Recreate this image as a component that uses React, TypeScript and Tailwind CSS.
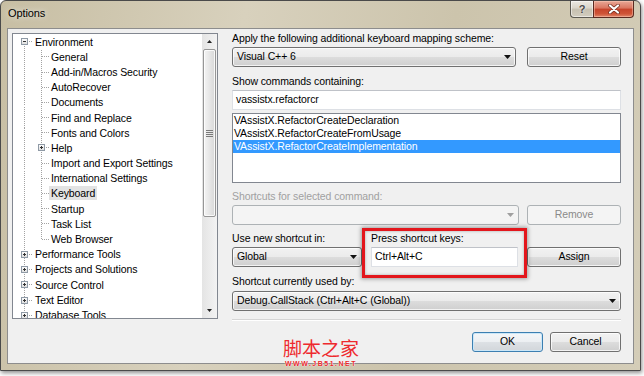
import React from "react";

type Node = { label: string; level: 0 | 1; box?: "+" | "-"; selected?: boolean };

const NODES: Node[] = [
  { label: "Environment", level: 0, box: "-" },
  { label: "General", level: 1 },
  { label: "Add-in/Macros Security", level: 1 },
  { label: "AutoRecover", level: 1 },
  { label: "Documents", level: 1 },
  { label: "Find and Replace", level: 1 },
  { label: "Fonts and Colors", level: 1 },
  { label: "Help", level: 1, box: "+" },
  { label: "Import and Export Settings", level: 1 },
  { label: "International Settings", level: 1 },
  { label: "Keyboard", level: 1, selected: true },
  { label: "Startup", level: 1 },
  { label: "Task List", level: 1 },
  { label: "Web Browser", level: 1 },
  { label: "Performance Tools", level: 0, box: "+" },
  { label: "Projects and Solutions", level: 0, box: "+" },
  { label: "Source Control", level: 0, box: "+" },
  { label: "Text Editor", level: 0, box: "+" },
  { label: "Database Tools", level: 0, box: "+" },
];

const ROW = 15.2;
const cy = (i: number) => Math.floor(7.6 + ROW * i) + 0.5;

function TreeLines() {
  return (
    <svg className="pointer-events-none absolute left-0 top-0" width="189" height="284">
      <defs>
        <linearGradient id="bx" x1="0" y1="0" x2="0" y2="1">
          <stop offset="0" stopColor="#ffffff" />
          <stop offset="1" stopColor="#dcdcdc" />
        </linearGradient>
      </defs>
      <g stroke="#a3a3a3" strokeDasharray="1 1" shapeRendering="crispEdges">
        <line x1="11.5" y1={cy(0)} x2="11.5" y2="284" />
        <line x1="28.5" y1={cy(1) - 7} x2="28.5" y2={cy(13)} />
        {NODES.map((n, i) =>
          n.level === 0 ? (
            <line key={i} x1="12" y1={cy(i)} x2="20" y2={cy(i)} />
          ) : (
            <line key={i} x1="29" y1={cy(i)} x2="36" y2={cy(i)} />
          )
        )}
      </g>
      {NODES.map((n, i) => {
        if (!n.box) return null;
        const x = n.level === 0 ? 11.5 : 28.5;
        const y = cy(i);
        return (
          <g key={"b" + i} shapeRendering="crispEdges">
            <rect x={x - 3} y={y - 3} width="6" height="6" fill="url(#bx)" stroke="#8f9aa6" />
            <line x1={x - 1.5} y1={y} x2={x + 1.5} y2={y} stroke="#333" />
            {n.box === "+" && <line x1={x} y1={y - 1.5} x2={x} y2={y + 1.5} stroke="#333" />}
          </g>
        );
      })}
    </svg>
  );
}

function Tree() {
  return (
    <div className="ml-[4px] mt-[4px] flex h-[286px] w-[206px] shrink-0 border border-[#828790] bg-white">
      <div className="relative flex-1 overflow-hidden">
        <TreeLines />
        {NODES.map((n) => (
          <div
            key={n.label}
            className={`relative flex h-[15.2px] items-center whitespace-nowrap ${n.level === 0 ? "pl-[22px]" : "pl-[38px]"}`}
          >
            <span className={`-ml-[2px] px-[2px] leading-[14px] ${n.selected ? "bg-[#e3e3e3]" : ""}`}>{n.label}</span>
          </div>
        ))}
      </div>
      <div className="flex w-[15px] flex-col bg-[linear-gradient(to_right,#e4e4e4,#f3f3f3)]">
        <div className="flex h-[15px] items-center justify-center">
          <svg width="5" height="3"><path d="M0 3L2.5 0L5 3z" fill="#222" /></svg>
        </div>
        <div className="mx-[1px] flex h-[168px] items-center justify-center rounded-[2px] border border-[#969696] bg-[linear-gradient(to_right,#f4f4f4,#e6e6e6_50%,#d8d8d8)] shadow-[inset_0_0_0_1px_rgba(255,255,255,0.8)]">
          <svg width="7" height="7">
            <g stroke="#7a7a7a" shapeRendering="crispEdges">
              <line x1="0" y1="0.5" x2="7" y2="0.5" />
              <line x1="0" y1="2.5" x2="7" y2="2.5" />
              <line x1="0" y1="4.5" x2="7" y2="4.5" />
              <line x1="0" y1="6.5" x2="7" y2="6.5" />
            </g>
          </svg>
        </div>
        <div className="flex-1" />
        <div className="flex h-[15px] items-center justify-center">
          <svg width="5" height="3"><path d="M0 0L2.5 3L5 0z" fill="#222" /></svg>
        </div>
      </div>
    </div>
  );
}

function Btn({ children, className = "", disabled, isDefault }: { children: React.ReactNode; className?: string; disabled?: boolean; isDefault?: boolean }) {
  const look = disabled
    ? "border-[#adb2b5] bg-[#f4f4f4] text-[#8a8a8a]"
    : isDefault
    ? "border-[#3c7fb1] bg-[linear-gradient(#f4f6f8,#eceff2_50%,#dde1e5_50%,#d2d6da)] shadow-[inset_0_0_0_1px_#cbe7f8]"
    : "border-[#707070] bg-[linear-gradient(#f2f2f2,#ebebeb_50%,#dddddd_50%,#cfcfcf)] shadow-[inset_0_0_0_1px_rgba(255,255,255,0.75)]";
  return (
    <div className={`flex h-[20px] items-center justify-center rounded-[3px] border ${look} ${className}`}>{children}</div>
  );
}

function Combo({ value, className = "", disabled }: { value?: string; className?: string; disabled?: boolean }) {
  const look = disabled
    ? "border-[#adb2b5] bg-[#f4f4f4]"
    : "border-[#707070] bg-[linear-gradient(#f2f2f2,#ebebeb_50%,#dddddd_50%,#cfcfcf)] shadow-[inset_0_0_0_1px_rgba(255,255,255,0.75)]";
  return (
    <div className={`flex h-[20px] items-center justify-between rounded-[3px] border pl-[4px] pr-[4px] ${look} ${className}`}>
      <span className="whitespace-nowrap">{value}</span>
      <svg width="7" height="4"><path d="M0 0h7L3.5 4z" fill={disabled ? "#a0a0a0" : "#111"} /></svg>
    </div>
  );
}

function TextBox({ value, className = "" }: { value: string; className?: string }) {
  return (
    <div className={`flex h-[20px] items-center border border-[#dde0e5] border-t-[#bfc2c8] bg-white pl-[3px] ${className}`}>
      {value}
    </div>
  );
}

function Label({ children, muted, className = "" }: { children?: React.ReactNode; muted?: boolean; className?: string }) {
  return (
    <div className={`flex h-[14px] items-center whitespace-nowrap ${muted ? "text-[#a0a0a0]" : ""} ${className}`}>{children}</div>
  );
}

function RightPanel() {
  return (
    <div className="ml-[14px] flex w-[389px] flex-col">
      <Label className="mt-[3px]">Apply the following additional keyboard mapping scheme:</Label>
      <div className="mt-[1px] flex gap-[11px]">
        <Combo value="Visual C++ 6" className="w-[284px]" />
        <Btn className="flex-1">Reset</Btn>
      </div>
      <Label className="mt-[8px]">Show commands containing:</Label>
      <TextBox value="vassistx.refactorcr" className="mt-[1px]" />
      <div className="mt-[3px] h-[70px] border border-[#828790] bg-white">
        <div className="flex h-[13px] items-center pl-[1px]">VAssistX.RefactorCreateDeclaration</div>
        <div className="flex h-[13px] items-center pl-[1px]">VAssistX.RefactorCreateFromUsage</div>
        <div className="flex h-[13px] items-center bg-[#3399ff] pl-[1px] text-white">VAssistX.RefactorCreateImplementation</div>
      </div>
      <Label muted className="mt-[7px]">Shortcuts for selected command:</Label>
      <div className="mt-[1px] flex gap-[8px]">
        <Combo disabled className="w-[287px]" />
        <Btn disabled className="flex-1">Remove</Btn>
      </div>
      <div className="mt-[7px] grid grid-cols-[130px_147px_94px] gap-x-[9px]">
        <div className="flex flex-col">
          <Label>Use new shortcut in:</Label>
          <Combo value="Global" className="mt-[1px]" />
        </div>
        <div className="relative flex flex-col">
          <Label>Press shortcut keys:</Label>
          <TextBox value="Ctrl+Alt+C" className="mt-[1px]" />
          <div className="pointer-events-none absolute -bottom-[11px] -left-[9px] -right-[9px] -top-[4px] border-[3px] border-[#e3161c] shadow-[0_0_4px_1px_rgba(0,0,0,0.35),inset_0_0_3px_rgba(0,0,0,0.3)]" />
        </div>
        <div className="flex flex-col">
          <Label />
          <Btn className="mt-[1px]">Assign</Btn>
        </div>
      </div>
      <Label className="mt-[8px]">Shortcut currently used by:</Label>
      <Combo value="Debug.CallStack (Ctrl+Alt+C (Global))" className="mt-[2px]" />
      <div className="mt-[8px] h-[2px] border-t border-b border-t-[#d5d5d5] border-b-white" />
      <div className="mt-[11px] flex justify-end gap-[7px]">
        <Btn isDefault className="w-[71px]">OK</Btn>
        <Btn className="w-[71px]">Cancel</Btn>
      </div>
    </div>
  );
}

function TitleButtons() {
  return (
    <div className="flex">
      <div className="flex h-[17px] w-[23px] items-center justify-center rounded-bl-[4px] border border-t-0 border-r-0 border-[#5d5a52] bg-[linear-gradient(#ece9e2,#d9d4c8_45%,#c6c0b0_50%,#d2cdbf)] shadow-[inset_0_0_0_1px_rgba(255,255,255,0.5)]">
        <span className="text-[11px] font-bold leading-none text-[#4a4a4a] [text-shadow:0_0_2px_#fff]">?</span>
      </div>
      <div className="flex h-[17px] w-[41px] items-center justify-center rounded-br-[4px] border border-t-0 border-[#5b2a20] bg-[linear-gradient(#e8a896,#d9755f_45%,#c6432a_50%,#cf5437_80%,#e2886c)] shadow-[inset_0_0_0_1px_rgba(255,210,190,0.45)]">
        <svg width="12" height="10" viewBox="0 0 12 10">
          <path d="M2 1.5L10 8.5M10 1.5L2 8.5" stroke="#6b2a1c" strokeWidth="3.6" strokeLinecap="round" />
          <path d="M2 1.5L10 8.5M10 1.5L2 8.5" stroke="#ffffff" strokeWidth="2.2" strokeLinecap="round" />
        </svg>
      </div>
    </div>
  );
}

export default function App() {
  return (
    <div className="relative h-[376px] w-[644px] overflow-hidden bg-white font-['Liberation_Sans',Arial,sans-serif] text-[10.5px] tracking-[-0.1px] text-black">
      <div className="flex h-[371px] w-[641px] flex-col rounded-t-[6px] border border-[#4a4a4a] bg-[linear-gradient(100deg,#c7bea3,#d8d1bd_35%,#ccc4ac_65%,#d4cdb8)] shadow-[1px_2px_4px_rgba(0,0,0,0.45)]">
        <div className="flex h-[27px] shrink-0 items-start justify-between pl-[7px] pr-[6px]">
          <div className="mt-[5px] text-[11px] leading-[14px] [text-shadow:0_0_6px_rgba(255,255,255,0.9)]">Options</div>
          <TitleButtons />
        </div>
        <div className="mx-[6px] mb-[6px] flex flex-1 border border-[#8d8d8d] bg-[#f0f0f0]">
          <Tree />
          <RightPanel />
        </div>
      </div>
      <div className="pointer-events-none absolute left-[283px] top-[338px] flex flex-col items-center">
        <div className="font-['Noto_Sans_CJK_SC',sans-serif] text-[19px] leading-[20px] tracking-[0px] text-[#ee2a2e]">脚本之家</div>
        <div className="mt-[2px] text-[7px] font-bold leading-[8px] tracking-[1.5px] text-[#e8262a] [text-shadow:0_0_1px_#fff,0_0_1px_#fff]">WWW.JB51.NET</div>
      </div>
    </div>
  );
}
